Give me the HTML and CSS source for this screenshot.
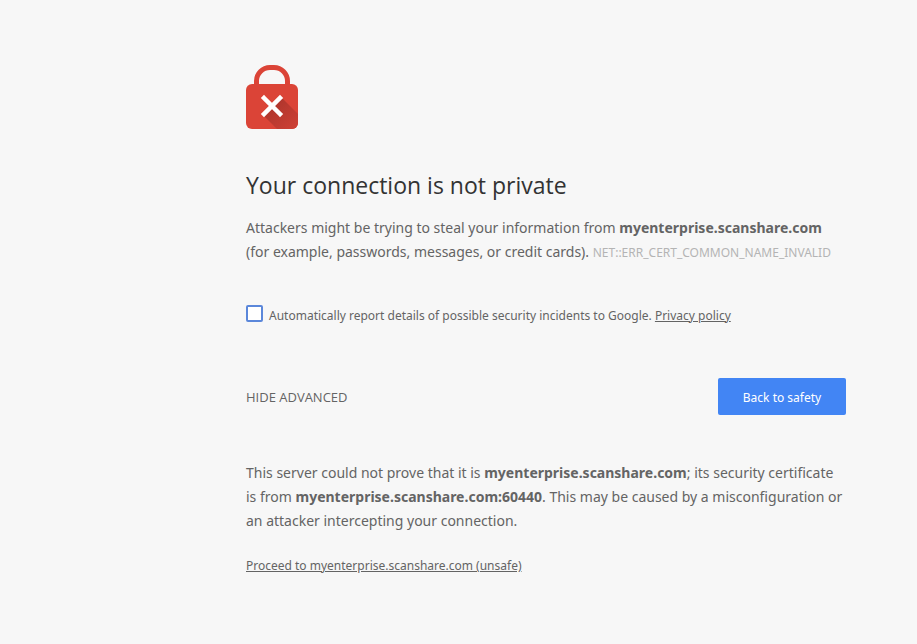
FILE: index.html
```html
<!DOCTYPE html>
<html lang="en">
<head>
<meta charset="utf-8">
<title>Privacy error</title>
<link rel="stylesheet" href="styles.css">
</head>
<body>
<main class="interstitial">
  <svg class="lock" viewBox="0 0 52 64" aria-hidden="true">
    <defs>
      <linearGradient id="shade" x1="0" y1="0" x2="1" y2="1">
        <stop offset="0.2" stop-color="#ad352c"/>
        <stop offset="1" stop-color="#cf4035"/>
      </linearGradient>
    </defs>
    <path d="M10.500 20V16a13.500 13.500 0 0 1 13.500 -13.500h4a13.500 13.500 0 0 1 13.500 13.500V20" fill="none" stroke="#db4437" stroke-width="5"/>
    <rect y="19" width="52" height="45" rx="6" fill="#db4437"/>
    <path d="M35 32L52 49V58a6 6 0 0 1-6 6H31L17 50Z" fill="url(#shade)"/>
    <path d="M18 33L34 49M34 33L18 49" stroke="#fff" stroke-width="4.500" stroke-linecap="square"/>
  </svg>
  <h1 class="title">Your connection is not private</h1>
  <p class="text">Attackers might be trying to steal your information from <strong>myenterprise.scanshare.com</strong> (for example, passwords, messages, or credit cards). <span class="code">NET::ERR_CERT_COMMON_NAME_INVALID</span></p>
  <div class="report">
    <input class="check" type="checkbox" id="report">
    <p class="report-text"><label for="report">Automatically report details of possible security incidents to Google.</label> <a class="link" href="#">Privacy policy</a></p>
  </div>
  <div class="actions">
    <button class="toggle" type="button">HIDE ADVANCED</button>
    <button class="primary" type="button">Back to safety</button>
  </div>
  <section class="details">
    <p class="text">This server could not prove that it is <strong>myenterprise.scanshare.com</strong>; its security certificate is from <strong>myenterprise.scanshare.com:60440</strong>. This may be caused by a misconfiguration or an attacker intercepting your connection.</p>
    <a class="link proceed" href="#">Proceed to myenterprise.scanshare.com (unsafe)</a>
  </section>
</main>
</body>
</html>
```
FILE: styles.css
```css
body {
  margin: 0;
  background: #f7f7f7;
  color: #646464;
  font-family: "Noto Sans", "Open Sans", sans-serif;
  font-size: 12px;
  line-height: 20px;
}
.interstitial {
  max-width: 600px;
  margin: 65px 71px 65px auto;
}
.lock {
  display: block;
  width: 52px;
  height: 64px;
}
.title {
  margin: 40px 0 15px;
  color: #333;
  font-family: "Open Sans", "Noto Sans", sans-serif;
  font-size: 23px;
  font-weight: 400;
  line-height: 32px;
}
.text {
  margin: 0;
  font-size: 14px;
  line-height: 24px;
}
.code {
  color: #b4b4b4;
  font-size: 12px;
}
.report {
  display: flex;
  align-items: center;
  gap: 6px;
  margin-top: 40px;
}
.check {
  appearance: none;
  box-sizing: border-box;
  flex: none;
  width: 17px;
  height: 17px;
  margin: 0 0 4px;
  border: 2px solid #5b87da;
  border-radius: 2px;
  background: #fff;
}
.report-text {
  margin: 0;
}
.link {
  color: inherit;
  text-decoration: underline;
}
.actions {
  display: flex;
  align-items: center;
  justify-content: space-between;
  margin-top: 52px;
}
.toggle,
.primary {
  border: 0;
  font: inherit;
  cursor: pointer;
}
.toggle {
  padding: 0;
  background: none;
  color: inherit;
  font-family: "Open Sans", "Noto Sans", sans-serif;
  font-size: 13px;
}
.primary {
  min-width: 128px;
  padding: 10px 20px 7px;
  border-radius: 2px;
  background: #4285f4;
  color: #fff;
}
.details {
  margin-top: 46px;
}
.proceed {
  display: inline-block;
  margin-top: 23px;
}
```
